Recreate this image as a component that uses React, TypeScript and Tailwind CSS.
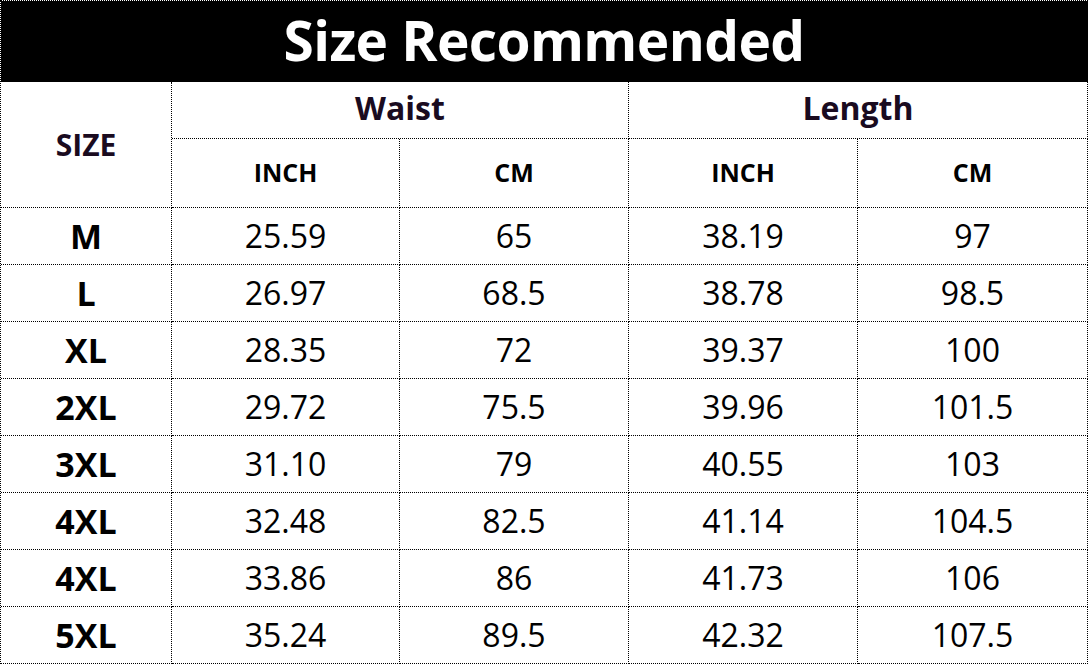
const rows = [
  ["M", "25.59", "65", "38.19", "97"],
  ["L", "26.97", "68.5", "38.78", "98.5"],
  ["XL", "28.35", "72", "39.37", "100"],
  ["2XL", "29.72", "75.5", "39.96", "101.5"],
  ["3XL", "31.10", "79", "40.55", "103"],
  ["4XL", "32.48", "82.5", "41.14", "104.5"],
  ["4XL", "33.86", "86", "41.73", "106"],
  ["5XL", "35.24", "89.5", "42.32", "107.5"],
];

const cell = "flex items-center justify-center border-r border-b border-dotted border-black";

export default function App() {
  return (
    <div className="w-[1090px] h-[665px] bg-white" style={{ fontFamily: '"Open Sans", "Noto Sans", sans-serif' }}>
      <div className="w-[1088px] border-l border-t border-dotted border-black">
        <div className="h-[81px] bg-black flex items-center justify-center border-r border-b border-dotted border-black">
          <span className="text-white font-bold text-[55px] leading-none tracking-[-0.6px] -mt-1">Size Recommended</span>
        </div>
        <div className="grid grid-cols-[171px_228px_229px_229px_230px] grid-rows-[57px_69px]">
          <div className={`${cell} row-span-2 text-[#1a0b1f] font-bold text-[30px]`}>SIZE</div>
          <div className={`${cell} col-span-2 text-[#1a0b1f] font-bold text-[32px] pb-1`}>Waist</div>
          <div className={`${cell} col-span-2 text-[#1a0b1f] font-bold text-[32px] pb-1`}>Length</div>
          <div className={`${cell} font-bold text-[25px] text-black`}>INCH</div>
          <div className={`${cell} font-bold text-[25px] text-black`}>CM</div>
          <div className={`${cell} font-bold text-[25px] text-black`}>INCH</div>
          <div className={`${cell} font-bold text-[25px] text-black`}>CM</div>
        </div>
        <div className="grid grid-cols-[171px_228px_229px_229px_230px] auto-rows-[57px]">
          {rows.map((r, i) =>
            r.map((v, j) => (
              <div
                key={`${i}-${j}`}
                className={`${cell} text-black ${j === 0 ? "font-bold text-[34px]" : "font-normal text-[32px]"}`}
              >
                {v}
              </div>
            ))
          )}
        </div>
      </div>
    </div>
  );
}
